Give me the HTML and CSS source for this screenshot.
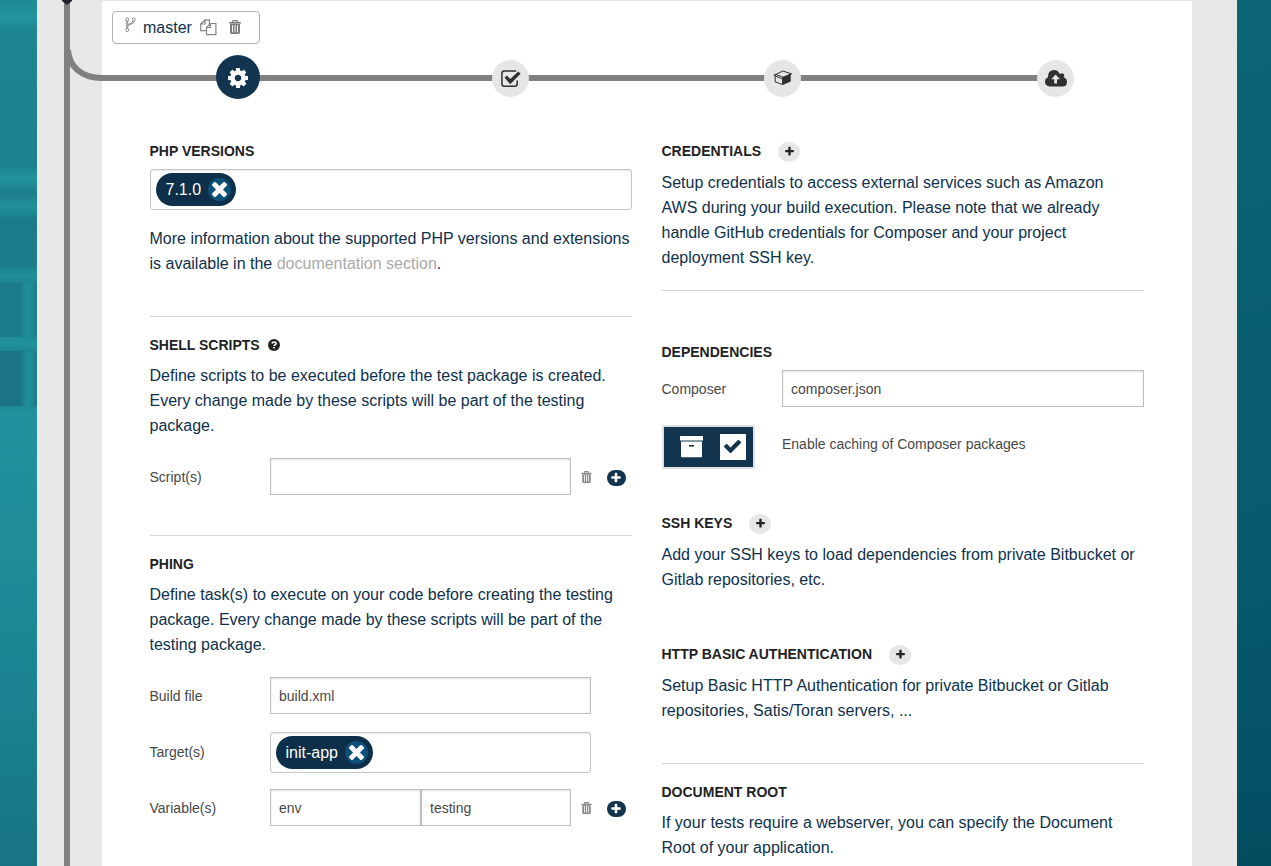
FILE: index.html
```html
<!DOCTYPE html>
<html lang="en">
<head>
<meta charset="utf-8">
<title>Build settings</title>
<link rel="stylesheet" href="styles.css">
</head>
<body>
<svg class="defs" aria-hidden="true">
  <symbol id="plus" viewBox="0 0 1792 1792"><path d="M1600 736v192q0 40-28 68t-68 28h-416v416q0 40-28 68t-68 28h-192q-40 0-68-28t-28-68v-416h-416q-40 0-68-28t-28-68v-192q0-40 28-68t68-28h416v-416q0-40 28-68t68-28h192q40 0 68 28t28 68v416h416q40 0 68 28t28 68z"/></symbol>
  <symbol id="times" viewBox="302 366 1188 1188"><path d="M1490 1322q0 40-28 68l-136 136q-28 28-68 28t-68-28l-294-294-294 294q-28 28-68 28t-68-28l-136-136q-28-28-28-68t28-68l294-294-294-294q-28-28-28-68t28-68l136-136q28-28 68-28t68 28l294 294 294-294q28-28 68-28t68 28l136 136q28 28 28 68t-28 68l-294 294 294 294q28 28 28 68z"/></symbol>
  <symbol id="check" viewBox="121 334 1550 1188"><path d="M1671 566q0 40-28 68l-724 724-136 136q-28 28-68 28t-68-28l-136-136-362-362q-28-28-28-68t28-68l136-136q28-28 68-28t68 28l294 295 656-657q28-28 68-28t68 28l136 136q28 28 28 68z"/></symbol>
  <symbol id="cog" viewBox="128 128 1536 1536"><path d="M1152 896q0-106-75-181t-181-75-181 75-75 181 75 181 181 75 181-75 75-181zm512-109v222q0 12-8 23t-20 13l-185 28q-19 54-39 91 35 50 107 138 10 12 10 25t-9 23q-27 37-99 108t-94 71q-12 0-26-9l-138-108q-44 23-91 38-16 136-29 186-7 28-36 28h-222q-14 0-24.5-8.5t-11.5-21.5l-28-184q-49-16-90-37l-141 107q-10 9-25 9-14 0-25-11-126-114-165-168-7-10-7-23 0-12 8-23 15-21 51-66.5t54-70.5q-27-50-41-99l-183-27q-13-2-21-12.5t-8-23.5v-222q0-12 8-23t19-13l186-28q14-46 39-92-40-57-107-138-10-12-10-24 0-10 9-23 26-36 98.5-107.5t94.5-71.5q13 0 26 10l138 107q44-23 91-38 16-136 29-186 7-28 36-28h222q14 0 24.5 8.5t11.5 21.5l28 184q49 16 90 37l142-107q9-9 24-9 13 0 25 10 129 119 165 170 7 8 7 22 0 12-8 23-15 21-51 66.5t-54 70.5q26 50 41 98l183 28q13 2 21 12.5t8 23.5z"/></symbol>
  <symbol id="trash" viewBox="0 0 12 14"><path fill="none" stroke="currentColor" stroke-width="1.3" d="M3.7 2.2V1.3Q3.7.7 4.3.7H7.7Q8.3.7 8.3 1.3V2.2"/><path d="M.5 2H11.5Q12 2 12 2.5V3.4H0V2.5Q0 2 .5 2Z"/><path fill-rule="evenodd" d="M1 3.8H11V12.6Q11 14 9.6 14H2.4Q1 14 1 12.6ZM3.1 5V12.3H4V5ZM5.5 5V12.3H6.5V5ZM8 5V12.3H8.9V5Z"/></symbol>
</svg>
<div class="page">
  <div class="shell">
    <div class="rail">
      <svg class="rail-art" width="65" height="866" viewBox="0 0 65 866"><path d="M30 0V866" stroke="#808080" stroke-width="6"/><path d="M31 50C32 66 44 78 65 78" stroke="#808080" stroke-width="6"/><path d="M25 0H35V1L30 5L25 1Z" fill="#222028"/></svg>
    </div>
    <main class="panel">
      <div class="branch">
        <svg class="fork" width="11" height="16" viewBox="0 0 11 16"><circle cx="2.2" cy="2.5" r="1.6"/><circle cx="8.8" cy="2.5" r="1.6"/><circle cx="2.2" cy="13" r="1.6"/><path d="M1.7 4V11.4M2.8 4V11.4M2.8 9.3Q3.2 8.2 5.2 7.6Q9 6.8 9 4M2.8 7.6L5 6.7Q7.5 6 7.7 4"/></svg>
        <span class="branch-name">master</span>
        <svg class="copy" width="17" height="17" viewBox="0 0 17 17"><path d="M6.2 11.6H.7V5L5 .8H9.4V5M5 .8V5H.7"/><path d="M10.5 4.5H15.9V15.7H6.5V8.5L10.5 4.5ZM10.5 4.5V8.5H6.5" fill="#fff"/></svg>
        <svg class="bin" width="12" height="14"><use href="#trash"/></svg>
      </div>
      <nav class="steps">
        <span class="step active"><svg class="gear" width="20" height="20"><use href="#cog"/></svg></span>
        <span class="step"><svg width="20" height="18" viewBox="0 0 20 18"><path d="M15.2 1H3.4Q.9 1 .9 3.5V13.7Q.9 16.2 3.4 16.2H13.7Q16.2 16.2 16.2 13.7V10.5" fill="none" stroke="currentColor" stroke-width="1.5"/><path d="M3.6 7.8L5.8 5.6L9.2 9L17.3 1.4L19.6 3.8L9.2 14.2Z"/></svg></span>
        <span class="step"><svg class="package" width="20" height="16" viewBox="0 0 20 16"><path d="M2.2 6V11.9L9.6 14.5V7.2M1 5.4L9.8 1L18.5 3.8L10 7.2L2.2 4.2L1 5.4L8.5 8.6L10 7.2" fill="none" stroke="currentColor" stroke-width="1"/><path d="M9.7 7.4L18.8 3.5L17.7 5.4V11.6L9.7 14.9Z"/></svg></span>
        <span class="step last"><svg width="22" height="17" viewBox="0 0 22 17"><path fill-rule="evenodd" d="M5 16.5Q0 16.2 0 11.6Q0 8.6 3 7.2Q2.8 0 9.3 0Q13 0 14.7 4Q18.2 1.8 19.3 5.2Q19.4 6.4 18.6 7.3Q22 8.2 22 12Q22 16.5 17.4 16.5ZM10.6 4.6L6.5 8.9V9.3H9.2V13.5H12V9.3H14.8V8.9Z"/></svg></span>
      </nav>
      <div class="columns">
        <div class="col">
          <section class="php">
            <h3>PHP VERSIONS</h3>
            <div class="tags"><span class="tag">7.1.0<i class="close"><svg width="15" height="15"><use href="#times"/></svg></i></span></div>
            <p>More information about the supported PHP versions and extensions is available in the <a>documentation section</a>.</p>
          </section>
          <section class="scripts">
            <h3>SHELL SCRIPTS <svg class="help" width="12" height="12" viewBox="0 0 12 12"><circle cx="6" cy="6" r="6"/><path d="M4 4.5Q4.3 3 6 3Q8 3 8 4.5Q8 5.4 6.9 5.9Q6.1 6.3 6.1 7.1M6.1 8.1V9.6" fill="none" stroke="#fff" stroke-width="1.6"/></svg></h3>
            <p>Define scripts to be executed before the test package is created. Every change made by these scripts will be part of the testing package.</p>
            <div class="row"><label>Script(s)</label><div class="field medium"></div><svg class="remove" width="11" height="12"><use href="#trash"/></svg><span class="add"><svg width="12" height="12"><use href="#plus"/></svg></span></div>
          </section>
          <section class="phing">
            <h3>PHING</h3>
            <p>Define task(s) to execute on your code before creating the testing package. Every change made by these scripts will be part of the testing package.</p>
            <div class="row"><label>Build file</label><div class="field long">build.xml</div></div>
            <div class="row target"><label>Target(s)</label><div class="tags long"><span class="tag">init-app<i class="close"><svg width="15" height="15"><use href="#times"/></svg></i></span></div></div>
            <div class="row variables"><label>Variable(s)</label><div class="field key">env</div><div class="field value">testing</div><svg class="remove" width="11" height="12"><use href="#trash"/></svg><span class="add"><svg width="12" height="12"><use href="#plus"/></svg></span></div>
          </section>
        </div>
        <div class="col">
          <section class="credentials">
            <h3>CREDENTIALS <span class="more"><svg width="11" height="11"><use href="#plus"/></svg></span></h3>
            <p>Setup credentials to access external services such as Amazon AWS during your build execution. Please note that we already handle GitHub credentials for Composer and your project deployment SSH key.</p>
          </section>
          <section class="dependencies">
            <h3>DEPENDENCIES</h3>
            <div class="row"><label>Composer</label><div class="field wide">composer.json</div></div>
            <div class="row cache"><span class="toggle"><svg width="23" height="22" viewBox="0 0 23 22"><path d="M0 0H23V4.5H0ZM1 5.5H22V20.5Q22 21.3 21.2 21.3H1.8Q1 21.3 1 20.5Z" fill="#fff"/><rect x="9" y="9" width="5" height="1.6" fill="#12344f"/></svg><span class="box"><svg width="17" height="13"><use href="#check"/></svg></span></span><span class="cache-text">Enable caching of Composer packages</span></div>
          </section>
          <section class="ssh">
            <h3>SSH KEYS <span class="more"><svg width="11" height="11"><use href="#plus"/></svg></span></h3>
            <p>Add your SSH keys to load dependencies from private Bitbucket or Gitlab repositories, etc.</p>
          </section>
          <section class="auth">
            <h3>HTTP BASIC AUTHENTICATION <span class="more"><svg width="11" height="11"><use href="#plus"/></svg></span></h3>
            <p>Setup Basic HTTP Authentication for private Bitbucket or Gitlab repositories, Satis/Toran servers, ...</p>
          </section>
          <section class="root">
            <h3>DOCUMENT ROOT</h3>
            <p>If your tests require a webserver, you can specify the Document Root of your application.</p>
          </section>
        </div>
      </div>
    </main>
  </div>
</div>
</body>
</html>
```
FILE: styles.css
```css
* { box-sizing: border-box; }
body {
  margin: 0;
  height: 866px;
  overflow: hidden;
  font: 16px/25px "Liberation Sans", Arial, sans-serif;
  color: #0e314c;
}
svg { display: block; flex: none; fill: currentColor; }
.defs { display: none; }

.page {
  height: 866px;
  padding: 0 34px 0 37px;
  background:
    linear-gradient(90deg, #1a7484 0, #1a7484 20px, #1f8c98 26px, #1f8c98 31px, #1b7887 37px) 0 351px / 37px 55px no-repeat,
    linear-gradient(90deg, #1c7b8a 0, #1c7b8a 20px, #1f8c98 26px, #1f8c98 31px, #1c7b8a 37px) 0 283px / 37px 54px no-repeat,
    linear-gradient(180deg, #1f8893 0, #23959f 18px, #1e8591 30px, #1d808e 165px, #23949e 178px, #1c7d8b 193px, #229199 206px, #1b7b8a 220px, #1c7c8a 264px, #208f99 275px, #1e8591 283px, #1f8995 335px, #21929c 344px, #1e8591 351px, #1e8591 400px, #21929d 415px, #1f8b97 560px, #1a8290 700px, #187482 866px) 0 0 / 37px 866px no-repeat,
    linear-gradient(170deg, #0d6675 0, #0b6073 150px, #085a6d 560px, #034c60 866px) 100% 0 / 34px 866px no-repeat;
}
.shell { display: flex; width: 1200px; height: 866px; background: #e8e8e8; }
.rail { width: 65px; flex: none; }
.rail-art { fill: none; }
.panel {
  width: 1090px;
  height: 866px;
  padding-top: 10px;
  border-top: 1px solid #e4e4e4;
  background: #fff;
  background-clip: padding-box;
}

.branch {
  display: flex;
  align-items: center;
  width: 148px;
  height: 33px;
  margin-left: 10px;
  padding-left: 12px;
  border: 1px solid #b0b0b0;
  border-radius: 4px;
  color: #7d7d7d;
}
.fork, .copy { fill: none; stroke: #858585; }
.fork { margin-top: -5px; stroke-width: .9; }
.branch-name { margin-left: 7px; color: #0e314c; }
.copy { margin-left: 8px; stroke-width: 1.2; }
.bin { margin: -1px 0 0 12px; }

.steps {
  display: flex;
  align-items: center;
  height: 44px;
  margin-top: 11px;
  padding-left: 114px;
  background: linear-gradient(#808080, #808080) 0 20px / 960px 6px no-repeat;
}
.step {
  display: flex;
  align-items: center;
  justify-content: center;
  width: 37px;
  height: 37px;
  margin: 3px 0 0 235px;
  border-radius: 50%;
  background: #e6e6e6;
  color: #303030;
}
.step.active { width: 44px; height: 44px; margin: 0 -3px 0 0; background: #12344f; color: #fff; }
.step.last { margin-left: 236px; }
.gear { margin-top: 2px; }
.package { margin-top: -2px; }

.columns { display: flex; gap: 30px; padding: 42px 0 0 47.5px; }
.col { width: 482px; flex: none; }
h3 {
  display: flex;
  align-items: center;
  height: 20px;
  margin: 0;
  font-size: 14px;
  line-height: 20px;
  color: #222;
}
p { margin: 0; }
a { color: #aaa; }

.row { display: flex; align-items: center; font-size: 14px; color: #484848; }
.row label { width: 120px; flex: none; padding-top: 1px; line-height: 26px; }
.field {
  height: 37px;
  padding: 0 8.5px;
  border: 1px solid #bfbfbf;
  box-shadow: inset 0 1px 2px rgba(0, 0, 0, .12);
  line-height: 37px;
}
.medium { width: 301px; }
.long { width: 321px; }
.key, .value { width: 151px; }
.value { width: 150px; }
.wide { width: 362px; }
.tags {
  height: 41px;
  padding: 3px 5px;
  border: 1px solid #c6c6c6;
  border-radius: 3px;
  box-shadow: inset 0 1px 2px rgba(0, 0, 0, .1);
}
.tag {
  display: inline-flex;
  align-items: center;
  gap: 7px;
  height: 33px;
  padding: 0 5px 0 10px;
  border-radius: 17px;
  background: #0e2f49;
  font-size: 16px;
  color: #fff;
}
.close {
  display: flex;
  align-items: center;
  justify-content: center;
  width: 23px;
  height: 23px;
  border-radius: 50%;
  background: #0d5078;
}
.remove { margin-left: 10px; color: #8b8b8b; }
.add {
  display: flex;
  align-items: center;
  justify-content: center;
  width: 19px;
  height: 16px;
  margin: 2px 0 0 15px;
  border-radius: 8px;
  background: #12344f;
  color: #fff;
}
.more {
  display: flex;
  align-items: center;
  justify-content: center;
  width: 22px;
  height: 20px;
  margin: 2px 0 0 17px;
  padding-bottom: 1px;
  border-radius: 50%;
  background: #e6e6e6;
}
.help { margin-left: 8px; }

.php { height: 176px; border-bottom: 1px solid #d6d6d6; }
.php .tags { margin-top: 8px; }
.php p { margin-top: 16px; }
.scripts { height: 219px; padding-top: 18px; border-bottom: 1px solid #d6d6d6; }
.scripts p, .phing p { margin-top: 8px; }
.scripts .row, .phing p + .row { margin-top: 20px; }
.phing { padding-top: 18px; }
.phing .target { margin-top: 18px; }
.phing .target label { padding: 0 0 2px; }
.phing .variables { margin-top: 16px; }

.credentials { height: 150px; border-bottom: 1px solid #d6d6d6; }
.credentials p { padding-right: 20px; }
.credentials p, .ssh p, .auth p { margin-top: 9px; }
.dependencies { height: 222px; padding-top: 51px; }
.dependencies .row { margin-top: 8px; }
.dependencies .cache { height: 44px; margin-top: 18px; }
.toggle {
  display: flex;
  align-items: center;
  gap: 17px;
  width: 93px;
  height: 44px;
  padding-left: 16px;
  border: 2px solid #dfe1e2;
  background: #12344f;
}
.box {
  display: flex;
  align-items: center;
  justify-content: center;
  width: 26px;
  height: 26px;
  margin-top: -1px;
  background: #fff;
  color: #12344f;
}
.cache-text { margin: -6px 0 0 27.5px; }
.ssh { height: 131px; }
.auth { height: 120px; border-bottom: 1px solid #d6d6d6; }
.root { padding-top: 18px; }
.root p { margin-top: 8px; }
```
